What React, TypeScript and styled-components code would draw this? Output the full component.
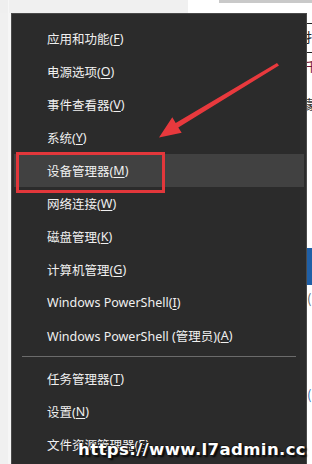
import styled, { createGlobalStyle } from 'styled-components';

const GlobalStyle = createGlobalStyle`
    html, body {
        margin: 0;
        padding: 0;
        background: #ffffff;
    }
`;

type Item = { label: string; key: string; active?: boolean };

const topItems: Item[] = [
    { label: '应用和功能', key: 'F' },
    { label: '电源选项', key: 'O' },
    { label: '事件查看器', key: 'V' },
    { label: '系统', key: 'Y' },
    { label: '设备管理器', key: 'M', active: true },
    { label: '网络连接', key: 'W' },
    { label: '磁盘管理', key: 'K' },
    { label: '计算机管理', key: 'G' },
    { label: 'Windows PowerShell', key: 'I' },
    { label: 'Windows PowerShell (管理员)', key: 'A' },
];

const bottomItems: Item[] = [
    { label: '任务管理器', key: 'T' },
    { label: '设置', key: 'N' },
    { label: '文件资源管理器', key: 'E' },
];

// bits of the page behind the menu, peeking out on the right
const fragments = [
    { ch: '一', gap: 2, color: '#222' },
    { ch: '扌', gap: -2, color: '#222' },
    { ch: '一', gap: -1, color: '#222' },
    { ch: '千', gap: -2, color: '#7a1838' },
    { ch: '蒙', gap: 22, color: '#333' },
];

const App = () => {
    const renderItem = (item: Item) => (
        <MenuItem key={item.label} $active={item.active}>
            {item.label}(<Key>{item.key}</Key>)
            {item.active && <RedBox />}
        </MenuItem>
    );

    return (
        <Screen>
            <GlobalStyle />
            <TopStrip>
                <TopGray />
                <TopWhite />
                <TopTab />
            </TopStrip>
            <BodyRow>
                <LeftGutter />
                <Menu>
                    {topItems.map(renderItem)}
                    <Separator />
                    {bottomItems.map(renderItem)}
                </Menu>
                <RightStrip>
                    {fragments.map((f, i) => (
                        <Fragment key={i} $gap={f.gap} $color={f.color}>
                            {f.ch}
                        </Fragment>
                    ))}
                    <BlueBar />
                    <Paren $gap={6} $color="#666">(</Paren>
                    <Paren $gap={80} $color="#3a6fb0">(</Paren>
                </RightStrip>
            </BodyRow>
            <Arrow viewBox="0 0 312 464" width={312} height={464}>
                <polygon
                    points="277,63 175.7,122.9 172.3,117.3 159,137.5 181.7,132.7 178.3,127.6 279,65.5"
                    fill="#e8393d"
                />
            </Arrow>
            <Watermark>https://www.l7admin.cc</Watermark>
        </Screen>
    );
};

const Screen = styled.div`
    position: relative;
    width: 312px;
    height: 464px;
    overflow: hidden;
    background: #ffffff;
    display: flex;
    flex-direction: column;
`;
const TopStrip = styled.div`
    display: flex;
    height: 13px;
    flex-shrink: 0;
`;
const TopGray = styled.div`
    width: 180px;
    background: #f0f0f0;
    border-left: 8px solid #efefef;
    box-shadow: inset 1px 0 0 #f7f7f7;
`;
const TopWhite = styled.div`
    width: 31px;
    background: #ffffff;
`;
const TopTab = styled.div`
    flex: 1;
    background: #ffffff;
    border-top: 3px solid #c9c9c9;
`;
const BodyRow = styled.div`
    display: flex;
    flex: 1;
    min-height: 0;
`;
const LeftGutter = styled.div`
    width: 11px;
    flex-shrink: 0;
    background: #f0f0f0;
    box-shadow: inset -3px 0 0 #f6f6f6;
`;
const Menu = styled.div`
    width: 296px;
    flex-shrink: 0;
    box-sizing: border-box;
    background: #2b2b2b;
    border: 1px solid #4a4a4a;
    border-bottom: none;
    padding: 8px 2px 0 0;
    display: flex;
    flex-direction: column;
`;
const MenuItem = styled.div<{ $active?: boolean }>`
    position: relative;
    height: 33px;
    display: flex;
    align-items: center;
    padding-left: 33px;
    margin-left: 2px;
    background: ${({ $active }) => ($active ? '#414141' : 'transparent')};
    color: #f0f0f0;
    font-family: 'Noto Sans', 'Noto Sans CJK SC', sans-serif;
    font-size: 12.5px;
    white-space: nowrap;
`;
const Key = styled.span`
    text-decoration: underline;
    text-underline-offset: 2px;
`;
const RedBox = styled.span`
    position: absolute;
    left: 2px;
    top: -2px;
    width: 149px;
    height: 41px;
    box-sizing: border-box;
    border: 3px solid #e2373b;
`;
const Separator = styled.div`
    height: 1px;
    margin: 4px 8px 5px 10px;
    background: #6b6b6b;
`;
const RightStrip = styled.div`
    flex: 1;
    overflow: hidden;
    background: #ffffff;
    display: flex;
    flex-direction: column;
    font-family: 'Noto Sans CJK SC', sans-serif;
    font-size: 13px;
    line-height: 16px;
`;
const Fragment = styled.span<{ $gap: number; $color: string }>`
    margin-top: ${({ $gap }) => $gap}px;
    margin-left: -2px;
    color: ${({ $color }) => $color};
`;
const BlueBar = styled.div`
    height: 37px;
    margin-top: 136px;
    background: #1f5fa6;
`;
const Paren = styled.span<{ $gap: number; $color: string }>`
    margin-top: ${({ $gap }) => $gap}px;
    color: ${({ $color }) => $color};
`;
const Arrow = styled.svg`
    position: absolute;
    left: 0;
    top: 0;
    pointer-events: none;
`;
const Watermark = styled.div`
    position: absolute;
    left: 78px;
    top: 440px;
    font-family: 'DejaVu Sans', 'Liberation Sans', sans-serif;
    font-weight: 700;
    font-size: 16.5px;
    letter-spacing: 0.4px;
    color: #ffffff;
    white-space: nowrap;
    text-shadow: 1px 1px 0 #1a1a1a, -1px 0 0 #1a1a1a, 0 -1px 0 #1a1a1a, 2px 2px 2px #000;
`;

export default App;
